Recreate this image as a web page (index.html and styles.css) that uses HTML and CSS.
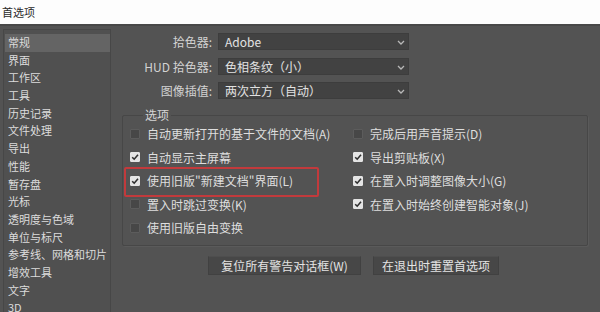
FILE: index.html
```html
<!DOCTYPE html>
<html lang="zh">
<head>
<meta charset="utf-8">
<link rel="stylesheet" href="styles.css">
</head>
<body>
<div class="titlebar">首选项</div>
<div class="window">
  <ul class="sidebar">
    <li class="item selected">常规</li>
    <li class="item">界面</li>
    <li class="item">工作区</li>
    <li class="item">工具</li>
    <li class="item">历史记录</li>
    <li class="item">文件处理</li>
    <li class="item">导出</li>
    <li class="item">性能</li>
    <li class="item">暂存盘</li>
    <li class="item">光标</li>
    <li class="item">透明度与色域</li>
    <li class="item">单位与标尺</li>
    <li class="item">参考线、网格和切片</li>
    <li class="item">增效工具</li>
    <li class="item">文字</li>
    <li class="item">3D</li>
  </ul>
  <div class="main">
    <div class="fields">
      <div class="field">
        <span class="field-label">拾色器:</span>
        <div class="select"><span>Adobe</span><svg class="chev" viewBox="0 0 8 5" width="8" height="5"><path d="M1 1 L4 4 L7 1" fill="none" stroke="#b8b8b8" stroke-width="1.3"/></svg></div>
      </div>
      <div class="field">
        <span class="field-label">HUD 拾色器:</span>
        <div class="select"><span>色相条纹（小）</span><svg class="chev" viewBox="0 0 8 5" width="8" height="5"><path d="M1 1 L4 4 L7 1" fill="none" stroke="#b8b8b8" stroke-width="1.3"/></svg></div>
      </div>
      <div class="field">
        <span class="field-label">图像插值:</span>
        <div class="select"><span>两次立方（自动）</span><svg class="chev" viewBox="0 0 8 5" width="8" height="5"><path d="M1 1 L4 4 L7 1" fill="none" stroke="#b8b8b8" stroke-width="1.3"/></svg></div>
      </div>
    </div>
    <fieldset class="group">
      <legend class="legend">选项</legend>
      <div class="options">
        <div class="opt"><span class="box"></span>自动更新打开的基于文件的文档(A)</div>
        <div class="opt"><span class="box"></span>完成后用声音提示(D)</div>
        <div class="opt"><span class="box checked"><svg viewBox="0 0 10 10" width="10" height="10"><path d="M2.2 5.2 L4.2 7.2 L8 2.8" fill="none" stroke="#2e2e2e" stroke-width="1.6"/></svg></span>自动显示主屏幕</div>
        <div class="opt"><span class="box checked"><svg viewBox="0 0 10 10" width="10" height="10"><path d="M2.2 5.2 L4.2 7.2 L8 2.8" fill="none" stroke="#2e2e2e" stroke-width="1.6"/></svg></span>导出剪贴板(X)</div>
        <div class="opt"><span class="box checked"><svg viewBox="0 0 10 10" width="10" height="10"><path d="M2.2 5.2 L4.2 7.2 L8 2.8" fill="none" stroke="#2e2e2e" stroke-width="1.6"/></svg></span>使用旧版"新建文档"界面(L)<span class="highlight"></span></div>
        <div class="opt"><span class="box checked"><svg viewBox="0 0 10 10" width="10" height="10"><path d="M2.2 5.2 L4.2 7.2 L8 2.8" fill="none" stroke="#2e2e2e" stroke-width="1.6"/></svg></span>在置入时调整图像大小(G)</div>
        <div class="opt"><span class="box"></span>置入时跳过变换(K)</div>
        <div class="opt"><span class="box checked"><svg viewBox="0 0 10 10" width="10" height="10"><path d="M2.2 5.2 L4.2 7.2 L8 2.8" fill="none" stroke="#2e2e2e" stroke-width="1.6"/></svg></span>在置入时始终创建智能对象(J)</div>
        <div class="opt"><span class="box"></span>使用旧版自由变换</div>
      </div>
    </fieldset>
    <div class="buttons">
      <button class="btn btn-wide">复位所有警告对话框(W)</button>
      <button class="btn btn-narrow">在退出时重置首选项</button>
    </div>
  </div>
</div>
</body>
</html>
```
FILE: styles.css
```css
* { box-sizing: border-box; }
html, body { margin: 0; padding: 0; }
body {
  width: 600px;
  height: 312px;
  overflow: hidden;
  font-family: "Noto Sans CJK SC", "Noto Sans", sans-serif;
  background: #535353;
}
.titlebar {
  height: 24px;
  background: #fdfdfd;
  color: #2a2a2a;
  font-size: 11px;
  line-height: 24px;
  padding-left: 2px;
}
.window {
  display: flex;
  height: 288px;
  overflow: hidden;
  background: #535353;
  border-top: 2px solid #484848;
}
.sidebar {
  list-style: none;
  margin: 3px 0 0 3px;
  padding: 4px 0 0 1px;
  width: 108px;
  height: 300px;
  background: #505050;
  border: 1px solid #474747;
  border-bottom: none;
}
.item {
  height: 17.7px;
  line-height: 17.7px;
  font-size: 11px;
  color: #dcdcdc;
  padding-left: 3px;
}
.item.selected {
  background: #646464;
}
.main {
  flex: 1;
  display: flex;
  flex-direction: column;
  padding: 7px 0 0 11px;
}
.fields {
  display: flex;
  flex-direction: column;
  gap: 7.5px;
}
.field {
  display: flex;
  align-items: center;
}
.field-label {
  width: 95px;
  text-align: right;
  padding-right: 5px;
  font-size: 12px;
  color: #d2d2d2;
}
.select {
  width: 191px;
  height: 17px;
  margin-left: 1px;
  background: #424242;
  border: 1px solid #3d3d3d;
  display: flex;
  align-items: center;
  justify-content: space-between;
  padding: 0 3px 0 6px;
  font-size: 12px;
  color: #e2e2e2;
}
.chev { margin-top: 2px; }
.group {
  margin: 9px 0 0 0;
  width: 466px;
  height: 138px;
  border: 1px solid #474747;
  border-radius: 2px;
  padding: 0 0 0 7px;
  box-shadow: 1px 1px 0 #5a5a5a;
}
.legend {
  margin-left: 13px;
  padding: 0 2px;
  font-size: 12px;
  line-height: 14px;
  color: #d6d6d6;
}
.options {
  display: grid;
  grid-template-columns: 223px 1fr;
  grid-auto-rows: 23.5px;
  padding-top: 0;
}
.opt {
  position: relative;
  display: flex;
  align-items: center;
  font-size: 12px;
  color: #dedede;
  white-space: nowrap;
}
.box {
  width: 10px;
  height: 10px;
  margin-right: 7px;
  flex: none;
  background: #474747;
  border: 1px solid #5c5c5c;
  border-radius: 1px;
  display: flex;
}
.box.checked {
  background: #e4e4e4;
  border-color: #e4e4e4;
}
.box.checked svg { margin: -1px; }
.highlight {
  position: absolute;
  left: -6px;
  top: -2px;
  width: 195px;
  height: 30px;
  border: 2px solid #c23a3c;
  border-radius: 2px;
}
.buttons {
  display: flex;
  gap: 12px;
  margin: 10px 0 0 86px;
}
.btn {
  height: 19px;
  padding: 0;
  background: #474747;
  border: 1px solid #414141;
  border-top-color: #4e4e4e;
  color: #e4e4e4;
  font-family: "Noto Sans CJK SC", "Noto Sans", sans-serif;
  font-size: 12px;
  line-height: 17px;
}
.btn-wide { width: 153px; }
.btn-narrow { width: 126px; }
```
